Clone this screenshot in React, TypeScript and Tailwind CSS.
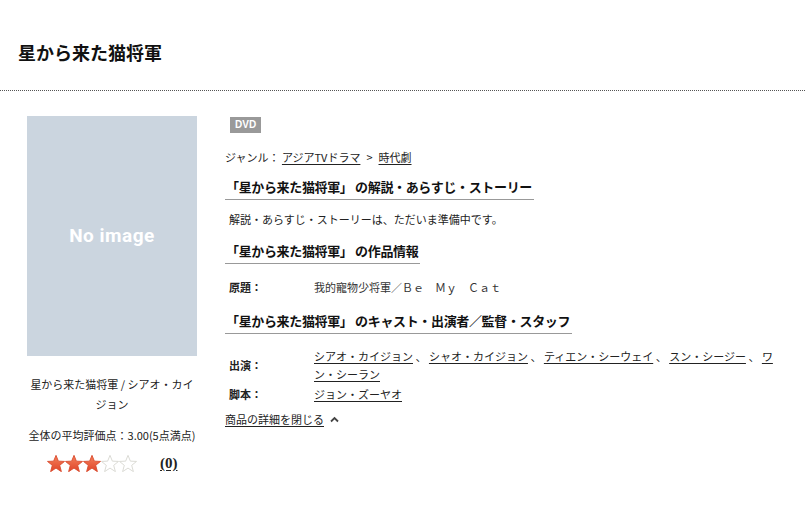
import { ReactNode } from 'react';

const font = { fontFamily: '"Noto Sans CJK JP", "Noto Sans", sans-serif' };

const Star = ({ filled }: { filled: boolean }) => (
  <svg width="18" height="17" viewBox="0 0 24 23">
    <defs>
      <linearGradient id="starFill" x1="0" y1="0" x2="0" y2="1">
        <stop offset="0" stopColor="#f4805a" />
        <stop offset="1" stopColor="#e0452a" />
      </linearGradient>
    </defs>
    <polygon
      points="12,0.5 15.2,8.3 23.5,8.7 17,14 19.3,22.5 12,17.7 4.7,22.5 7,14 0.5,8.7 8.8,8.3"
      fill={filled ? 'url(#starFill)' : 'none'}
      stroke={filled ? '#d9492c' : '#d6d6d0'}
      strokeWidth="1.2"
      strokeLinejoin="round"
    />
  </svg>
);

const SectionTitle = ({ children }: { children: ReactNode }) => (
  <h2 className="w-fit border-b border-[#999] pb-[3px] text-[13px] font-bold leading-[18px] tracking-[-0.35px] text-[#111] pl-[1px] pr-[2px]">
    {children}
  </h2>
);

const Link = ({ children }: { children: ReactNode }) => (
  <a className="text-[#222] underline underline-offset-2 cursor-pointer">{children}</a>
);

export default function App() {
  return (
    <div className="w-[805px] h-[506px] bg-white text-[#222] overflow-hidden" style={font}>
      <header className="h-[91px] border-b border-dotted border-[#555] flex items-center pl-[18px] pt-[14px]">
        <h1 className="text-[18px] font-bold text-[#111] leading-none">星から来た猫将軍</h1>
      </header>

      <div className="flex pt-[25px]">
        <aside className="ml-[27px] w-[170px] flex flex-col items-center">
          <div className="w-[170px] h-[240px] bg-[#cbd5df] flex items-center justify-center">
            <span className="text-white text-[19px] font-bold tracking-[0.5px]" style={{ fontFamily: '"Roboto", sans-serif' }}>
              No image
            </span>
          </div>
          <p className="mt-[18px] text-[11px] leading-[20px] text-center px-[2px]">
            星から来た猫将軍 / シアオ・カイジョン
          </p>
          <p className="mt-[11px] text-[11px] leading-[20px] text-center whitespace-nowrap">
            全体の平均評価点：3.00(5点満点)
          </p>
          <div className="mt-[7px] flex items-center w-full pl-[20px]">
            <div className="flex">
              <Star filled />
              <Star filled />
              <Star filled />
              <Star filled={false} />
              <Star filled={false} />
            </div>
            <span className="ml-[23px] text-[15px] font-bold underline underline-offset-2" style={{ fontFamily: '"Liberation Serif", serif' }}>
              (0)
            </span>
          </div>
        </aside>

        <main className="ml-[28px] w-[555px]">
          <div className="ml-[5px] mt-[1px] w-fit bg-[#999] text-white text-[10px] font-bold leading-[16px] px-[5px]" style={{ fontFamily: '"Liberation Sans", sans-serif' }}>
            DVD
          </div>

          <p className="mt-[15px] text-[11px] leading-[18px]">
            ジャンル： <Link>アジアTVドラマ</Link>
            <span className="mx-[6px]">&gt;</span>
            <Link>時代劇</Link>
          </p>

          <div className="mt-[12px]">
            <SectionTitle>「星から来た猫将軍」 の解説・あらすじ・ストーリー</SectionTitle>
          </div>
          <p className="mt-[10px] ml-[4px] text-[11px] leading-[18px]">解説・あらすじ・ストーリーは、ただいま準備中です。</p>

          <div className="mt-[14px]">
            <SectionTitle>「星から来た猫将軍」 の作品情報</SectionTitle>
          </div>
          <div className="mt-[14px] ml-[4px] flex text-[11px] leading-[18px]">
            <span className="w-[85px] font-bold">原題：</span>
            <span className="text-[#333]">我的寵物少将軍／Ｂｅ　Ｍｙ　Ｃａｔ</span>
          </div>

          <div className="mt-[16px]">
            <SectionTitle>「星から来た猫将軍」 のキャスト・出演者／監督・スタッフ</SectionTitle>
          </div>

          <div className="mt-[13px] ml-[4px] text-[11px] leading-[18px]">
            <div className="flex items-center">
              <span className="w-[85px] shrink-0 font-bold">出演：</span>
              <span className="w-[466px]">
                <Link>シアオ・カイジョン</Link> 、 <Link>シャオ・カイジョン</Link> 、 <Link>ティエン・シーウェイ</Link> 、{' '}
                <Link>スン・シージー</Link> 、 <Link>ワン・シーラン</Link>
              </span>
            </div>
            <div className="flex items-center mt-[2px]">
              <span className="w-[85px] shrink-0 font-bold">脚本：</span>
              <Link>ジョン・ズーヤオ</Link>
            </div>
          </div>

          <div className="mt-[7px] flex items-center text-[11px] leading-[18px]">
            <Link>商品の詳細を閉じる</Link>
            <svg className="ml-[6px]" width="9" height="7" viewBox="0 0 9 7">
              <path d="M1 5.5 L4.5 2 L8 5.5" fill="none" stroke="#444" strokeWidth="1.8" />
            </svg>
          </div>
        </main>
      </div>
    </div>
  );
}
